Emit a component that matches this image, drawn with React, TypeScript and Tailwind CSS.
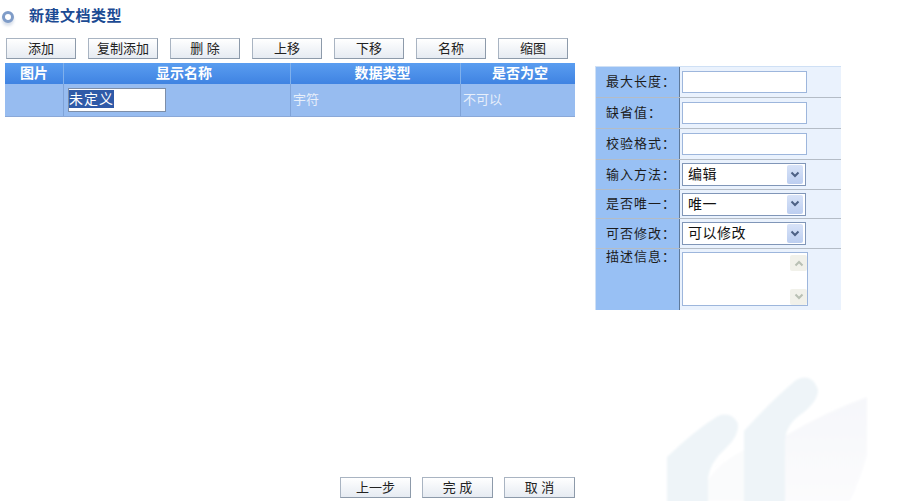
const FONT = "font-['Liberation_Sans','Noto_Sans_CJK_SC',sans-serif]";

function Btn({ label, w = "w-[71px]" }: { label: string; w?: string }) {
  return (
    <button className={`${w} h-[21px] shrink-0 border border-[#a9b4c2] border-r-[#8d9aaa] border-b-[#8d9aaa] bg-gradient-to-b from-white to-[#e6ebf2] text-[13px] leading-[19px] text-[#222] whitespace-pre`}>
      {label}
    </button>
  );
}

function Arrow({ up = false, muted = false }: { up?: boolean; muted?: boolean }) {
  return (
    <svg width="10" height="8" viewBox="0 0 10 8" className={up ? "rotate-180" : ""}>
      <path d="M1.5 1.5 L5 5 L8.5 1.5" fill="none" stroke={muted ? "#b9c0b4" : "#4d6185"} strokeWidth="2" />
    </svg>
  );
}

function Row({ label, children, h = "h-[31px]", last = false, top = false }: { label: string; children: React.ReactNode; h?: string; last?: boolean; top?: boolean }) {
  return (
    <div className={`flex ${h} ${last ? "" : "border-b border-[#b4bcc6]"}`}>
      <div className={`w-[84px] shrink-0 bg-[#98c0f4] border-r border-r-[#5f7a9c] pl-[10px] text-[13px] tracking-[1px] text-[#1c1c1c] ${top ? "leading-[15px]" : "flex items-center"}`}>
        {label}
      </div>
      <div className={`flex-1 bg-[#eaf2fd] pl-[2px] ${top ? "pt-[3px]" : "flex items-center"}`}>{children}</div>
    </div>
  );
}

function TextInput() {
  return <input className="block w-[125px] h-[22px] -mt-[1px] border border-[#9db6dc] bg-white outline-none" />;
}

function Sel({ value }: { value: string }) {
  return (
    <div className="relative w-[124px] h-[23px]">
      <select defaultValue={value} className="block w-full h-full appearance-none border border-[#8096b8] bg-white pl-[5px] text-[14px] tracking-[0.5px] leading-[21px] text-[#111] outline-none rounded-none">
        <option>{value}</option>
      </select>
      <span className="absolute right-[3px] top-[2px] w-[16px] h-[19px] rounded-[2px] bg-gradient-to-b from-[#d8e3f8] to-[#bccef0] flex items-center justify-center pointer-events-none">
        <Arrow />
      </span>
    </div>
  );
}

export default function App() {
  const buttons = ["添加", "复制添加", "删 除", "上移", "下移", "名称", "缩图"];
  const head = "flex items-center justify-center h-full font-bold text-[14px] text-white border-r border-[#7fb0ec]";
  const cell = "flex items-center h-full text-[13px] text-[#e8effa] border-r border-[#7fa3d8] pl-[2px]";
  return (
    <div className={`relative w-[908px] h-[501px] overflow-hidden bg-white ${FONT}`}>
      <svg className="absolute left-[660px] top-[370px]" width="248" height="131" viewBox="0 0 248 131">
        <defs>
          <filter id="soft" x="-10%" y="-10%" width="120%" height="120%">
            <feGaussianBlur stdDeviation="1.2" />
          </filter>
          <linearGradient id="fade" x1="0" y1="0" x2="0" y2="1">
            <stop offset="0" stopColor="#f6f7fa" />
            <stop offset="1" stopColor="#fbfbfd" />
          </linearGradient>
        </defs>
        <g filter="url(#soft)">
          <path d="M125 131 V66 Q165 42 207 27 V85 Q200 110 190 131 Z" fill="url(#fade)" />
          <path d="M48 131 V110 Q60 92 84 80 V131 Z" fill="#fafbfc" />
          <path d="M7 135 V87 Q35 60 58 46 Q72 41 78 54 Q79 66 66 78 Q50 92 48 108 V135 Z" fill="#eef4f8" />
          <path d="M84 135 V61 Q110 32 136 10 Q152 2 158 20 Q158 32 140 45 Q125 56 125 72 V135 Z" fill="#eef4f8" />
        </g>
      </svg>

      <div className="relative flex flex-col h-full">
        <div className="flex items-center h-[30px] pl-[2px] pt-[1px]">
          <span className="w-[12px] h-[12px] rounded-full border-[3px] border-[#7f9cc8] bg-white mt-[2px] shadow-[0_3px_3px_#d8dfea]" />
          <h1 className="ml-[15px] mt-[1px] font-bold text-[15px] tracking-[0.5px] text-[#1b4a93]">新建文档类型</h1>
        </div>

        <div className="flex gap-[12px] pl-[6px] mt-[8px]">
          {buttons.map((b) => (
            <Btn key={b} label={b} w="w-[70px]" />
          ))}
        </div>

        <div className="flex flex-1 pl-[5px] min-h-0">
          <div className="w-[570px] shrink-0 mt-[4px] self-start">
            <div className="flex h-[21px] bg-gradient-to-b from-[#5a9df0] to-[#3f83e2]">
              <div className={`${head} w-[59px]`}>图片</div>
              <div className={`${head} w-[227px] pl-[14px]`}>显示名称</div>
              <div className={`${head} w-[170px] pl-[14px]`}>数据类型</div>
              <div className={`${head} flex-1 border-r-0 pl-[4px]`}>是否为空</div>
            </div>
            <div className="flex h-[33px] bg-[#97bcf0] border-b border-[#8aa8d8]">
              <div className={`${cell} w-[59px]`} />
              <div className={`${cell} w-[227px] pl-[4px]`}>
                <span className="block w-[98px] h-[24px] bg-white border border-[#7d8ea8] text-[14px] tracking-[1px] leading-[20px]">
                  <span className="bg-[#2f5aa8] text-white inline-block leading-[18px]">未定义</span>
                </span>
              </div>
              <div className={`${cell} w-[170px]`}>宇符</div>
              <div className={`${cell} flex-1 border-r-0`}>不可以</div>
            </div>
          </div>

          <div className="ml-[20px] mt-[7px] w-[246px] h-[244px] self-start border border-[#cfe0f5] border-r-0 border-b-0 bg-[#eaf2fd]">
            <Row label="最大长度："><TextInput /></Row>
            <Row label="缺省值："><TextInput /></Row>
            <Row label="校验格式："><TextInput /></Row>
            <Row label="输入方法：" h="h-[30px]"><Sel value="编辑" /></Row>
            <Row label="是否唯一：" h="h-[29px]"><Sel value="唯一" /></Row>
            <Row label="可否修改：" h="h-[30px]"><Sel value="可以修改" /></Row>
            <Row label="描述信息：" h="h-[61px]" last top>
              <div className="relative w-[126px] h-[54px]">
                <textarea className="block w-full h-full resize-none border border-[#9db6dc] bg-white outline-none overflow-hidden" />
                <span className="absolute right-[1px] top-[3px] bottom-[1px] w-[17px] flex flex-col justify-between pointer-events-none">
                  <span className="h-[16px] bg-[#f1f1ea] rounded-[2px] flex items-center justify-center"><Arrow up muted /></span>
                  <span className="h-[16px] bg-[#f1f1ea] rounded-[2px] flex items-center justify-center"><Arrow muted /></span>
                </span>
              </div>
            </Row>
          </div>
        </div>

        <div className="flex justify-end gap-[11px] w-[575px] mb-[3px]">
          <Btn label="上一步" />
          <Btn label="完 成" />
          <Btn label="取 消" />
        </div>
      </div>
    </div>
  );
}
